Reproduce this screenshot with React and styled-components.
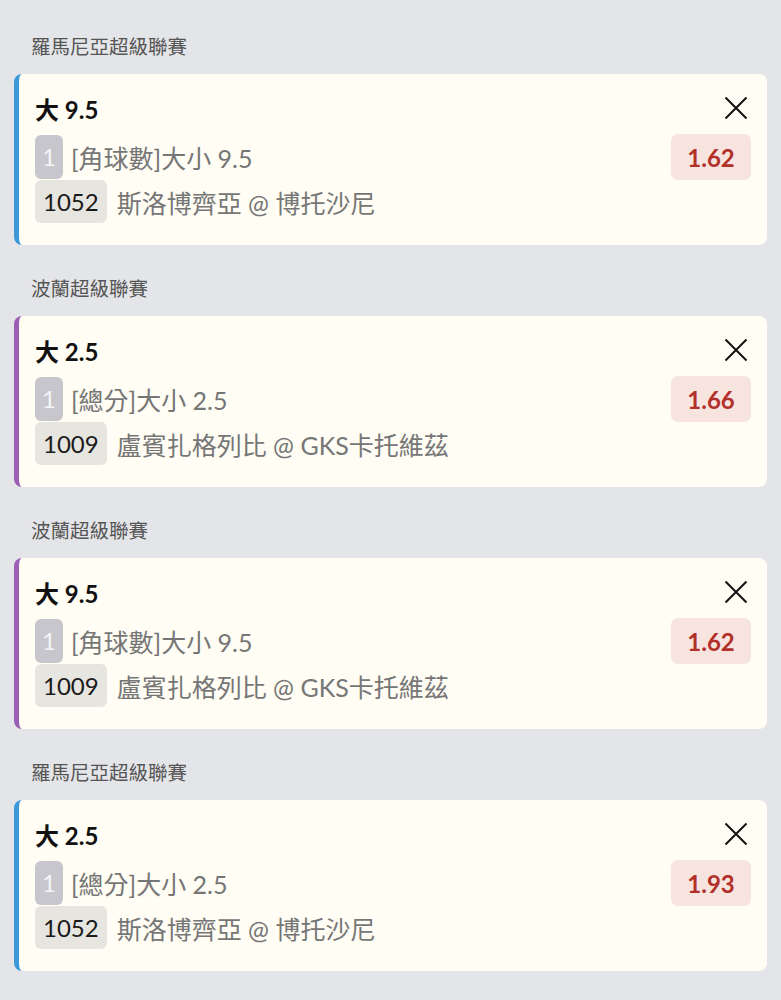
import React from "react";
import styled, { createGlobalStyle } from "styled-components";

const GlobalStyle = createGlobalStyle`
  body {
    margin: 0;
    background: #e4e5e8;
    font-family: Lato, "Noto Sans CJK TC", sans-serif;
  }
`;

const Page = styled.div`
  padding: 3px 14px 0 14px;
  display: flex;
  flex-direction: column;
`;

const Section = styled.section`
  display: flex;
  flex-direction: column;
  padding-top: 30px;
`;

const League = styled.div`
  padding: 0 0 13px 17px;
  line-height: 28px;
  font-size: 19.5px;
  color: #555;
`;

const Card = styled.div`
  background: #fffdf4;
  border-left: 5px solid ${(p) => p.accent};
  border-radius: 8px;
  padding: 19px 16px 21px 16px;
`;

const Header = styled.div`
  display: flex;
  justify-content: space-between;
  align-items: center;
  height: 30px;
`;

const Title = styled.div`
  font-size: 24px;
  font-weight: 700;
  color: #111;
`;

const Close = styled.button`
  border: none;
  background: none;
  padding: 0;
  margin-right: 2px;
  width: 26px;
  height: 26px;
  display: flex;
  align-items: center;
  justify-content: center;
  cursor: pointer;
`;

const Body = styled.div`
  display: flex;
  justify-content: space-between;
  align-items: flex-start;
  margin-top: 11px;
`;

const Rows = styled.div`
  display: flex;
  flex-direction: column;
`;

const Row = styled.div`
  display: flex;
  align-items: center;
  height: 45px;
  gap: ${(p) => p.gap}px;
  font-size: 25px;
  color: #767676;
`;

const Badge = styled.span`
  display: inline-flex;
  align-items: center;
  justify-content: center;
  height: ${(p) => (p.muted ? 44 : 43)}px;
  padding: 0 ${(p) => (p.muted ? 7 : 8)}px;
  border-radius: 6px;
  background: ${(p) => (p.muted ? "#c6c6cc" : "#e7e5df")};
  color: ${(p) => (p.muted ? "#f4f4f6" : "#1a1a1a")};
  font-size: 24px;
`;

const Odds = styled.div`
  width: 80px;
  height: 46px;
  border-radius: 7px;
  background: #f8e4df;
  color: #b2302a;
  font-size: 24px;
  font-weight: 700;
  display: flex;
  align-items: center;
  justify-content: center;
`;

const bets = [
  { league: "羅馬尼亞超級聯賽", color: "#3c98d6", title: "大 9.5", market: "[角球數]大小 9.5", no: "1052", match: "斯洛博齊亞 @ 博托沙尼", odds: "1.62" },
  { league: "波蘭超級聯賽", color: "#9b5fb5", title: "大 2.5", market: "[總分]大小 2.5", no: "1009", match: "盧賓扎格列比 @ GKS卡托維茲", odds: "1.66" },
  { league: "波蘭超級聯賽", color: "#9b5fb5", title: "大 9.5", market: "[角球數]大小 9.5", no: "1009", match: "盧賓扎格列比 @ GKS卡托維茲", odds: "1.62" },
  { league: "羅馬尼亞超級聯賽", color: "#3c98d6", title: "大 2.5", market: "[總分]大小 2.5", no: "1052", match: "斯洛博齊亞 @ 博托沙尼", odds: "1.93" },
];

const CloseIcon = () => (
  <svg width="24" height="24" viewBox="0 0 24 24">
    <path d="M1.5 1.5 L22.5 22.5 M22.5 1.5 L1.5 22.5" stroke="#111" strokeWidth="2" fill="none" />
  </svg>
);

const App = () => {
  return (
    <>
      <GlobalStyle />
      <Page>
        {bets.map((b, i) => (
          <Section key={i}>
            <League>{b.league}</League>
            <Card accent={b.color}>
              <Header>
                <Title>{b.title}</Title>
                <Close>
                  <CloseIcon />
                </Close>
              </Header>
              <Body>
                <Rows>
                  <Row gap={8}>
                    <Badge muted>1</Badge>
                    <span>{b.market}</span>
                  </Row>
                  <Row gap={10}>
                    <Badge>{b.no}</Badge>
                    <span>{b.match}</span>
                  </Row>
                </Rows>
                <Odds>{b.odds}</Odds>
              </Body>
            </Card>
          </Section>
        ))}
      </Page>
    </>
  );
};

export default App;
